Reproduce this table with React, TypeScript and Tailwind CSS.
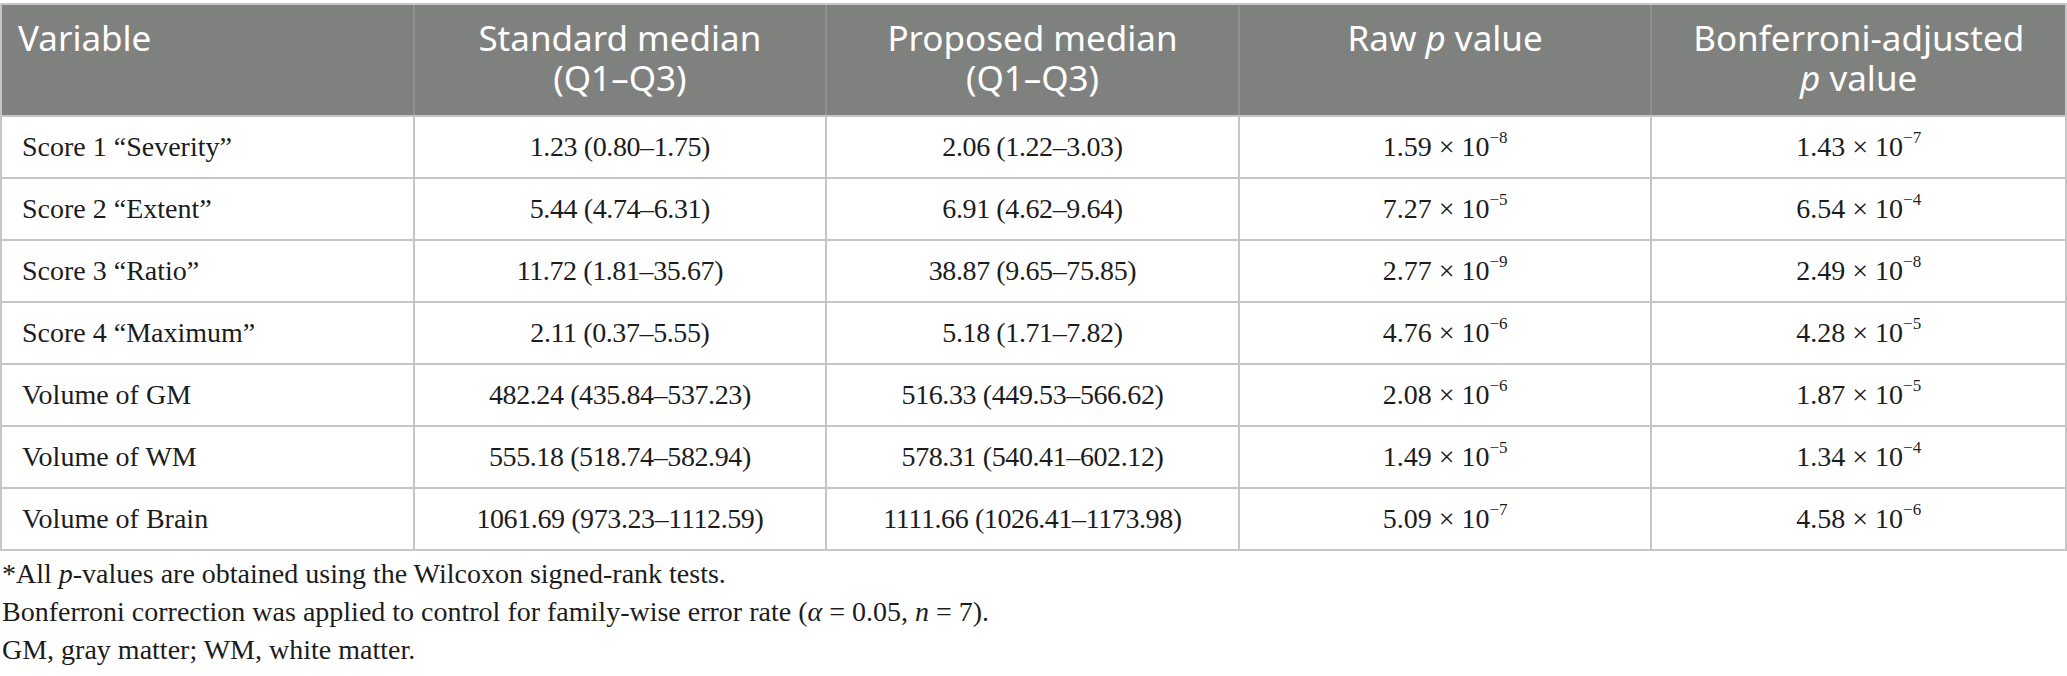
import React from "react";

type Row = {
  name: string;
  std: string;
  prop: string;
  raw: [string, string];
  adj: [string, string];
};

const rows: Row[] = [
  { name: "Score 1 “Severity”", std: "1.23 (0.80–1.75)", prop: "2.06 (1.22–3.03)", raw: ["1.59", "−8"], adj: ["1.43", "−7"] },
  { name: "Score 2 “Extent”", std: "5.44 (4.74–6.31)", prop: "6.91 (4.62–9.64)", raw: ["7.27", "−5"], adj: ["6.54", "−4"] },
  { name: "Score 3 “Ratio”", std: "11.72 (1.81–35.67)", prop: "38.87 (9.65–75.85)", raw: ["2.77", "−9"], adj: ["2.49", "−8"] },
  { name: "Score 4 “Maximum”", std: "2.11 (0.37–5.55)", prop: "5.18 (1.71–7.82)", raw: ["4.76", "−6"], adj: ["4.28", "−5"] },
  { name: "Volume of GM", std: "482.24 (435.84–537.23)", prop: "516.33 (449.53–566.62)", raw: ["2.08", "−6"], adj: ["1.87", "−5"] },
  { name: "Volume of WM", std: "555.18 (518.74–582.94)", prop: "578.31 (540.41–602.12)", raw: ["1.49", "−5"], adj: ["1.34", "−4"] },
  { name: "Volume of Brain", std: "1061.69 (973.23–1112.59)", prop: "1111.66 (1026.41–1173.98)", raw: ["5.09", "−7"], adj: ["4.58", "−6"] },
];

function Sci({ v }: { v: [string, string] }) {
  return (
    <span>
      {v[0]} × 10
      <sup className="text-[17px] top-[-0.75em]">{v[1]}</sup>
    </span>
  );
}

export default function App() {
  return (
    <div className="w-[2067px] h-[676px] bg-white pt-[3px] overflow-hidden">
      <div className="border-2 border-[#c6c6c6]">
        {/* header */}
        <div className="grid grid-cols-5 h-[110px] bg-[#7f817f] text-white font-['Noto_Sans',sans-serif] text-[35px] leading-[40px]">
          <div className="border-r-2 border-[#8f918f] pl-[16px] pt-[13px] text-left">Variable</div>
          <div className="border-r-2 border-[#8f918f] pt-[13px] text-center">
            Standard median
            <br />
            (Q1–Q3)
          </div>
          <div className="border-r-2 border-[#8f918f] pt-[13px] text-center">
            Proposed median
            <br />
            (Q1–Q3)
          </div>
          <div className="border-r-2 border-[#8f918f] pt-[13px] text-center">
            Raw <i>p</i> value
          </div>
          <div className="pt-[13px] text-center">
            Bonferroni-adjusted
            <br />
            <i>p</i> value
          </div>
        </div>
        {/* body */}
        {rows.map((r) => (
          <div
            key={r.name}
            className="grid grid-cols-5 h-[62px] border-t-2 border-[#c6c6c6] font-['Liberation_Serif',serif] text-[28px] text-[#1c1c1c]"
          >
            <div className="flex items-center pl-[20px] border-r-2 border-[#c6c6c6]">{r.name}</div>
            <div className="flex items-center justify-center border-r-2 border-[#c6c6c6] tracking-[-0.4px]">{r.std}</div>
            <div className="flex items-center justify-center border-r-2 border-[#c6c6c6] tracking-[-0.4px]">{r.prop}</div>
            <div className="flex items-center justify-center border-r-2 border-[#c6c6c6]">
              <Sci v={r.raw} />
            </div>
            <div className="flex items-center justify-center">
              <Sci v={r.adj} />
            </div>
          </div>
        ))}
      </div>
      <div className="pt-[4px] pl-[2px] font-['Liberation_Serif',serif] text-[28px] leading-[38px] text-[#1c1c1c]">
        <div>
          *All <i>p</i>-values are obtained using the Wilcoxon signed-rank tests.
        </div>
        <div>
          Bonferroni correction was applied to control for family-wise error rate (<i>α</i> = 0.05, <i>n</i> = 7).
        </div>
        <div>GM, gray matter; WM, white matter.</div>
      </div>
    </div>
  );
}
